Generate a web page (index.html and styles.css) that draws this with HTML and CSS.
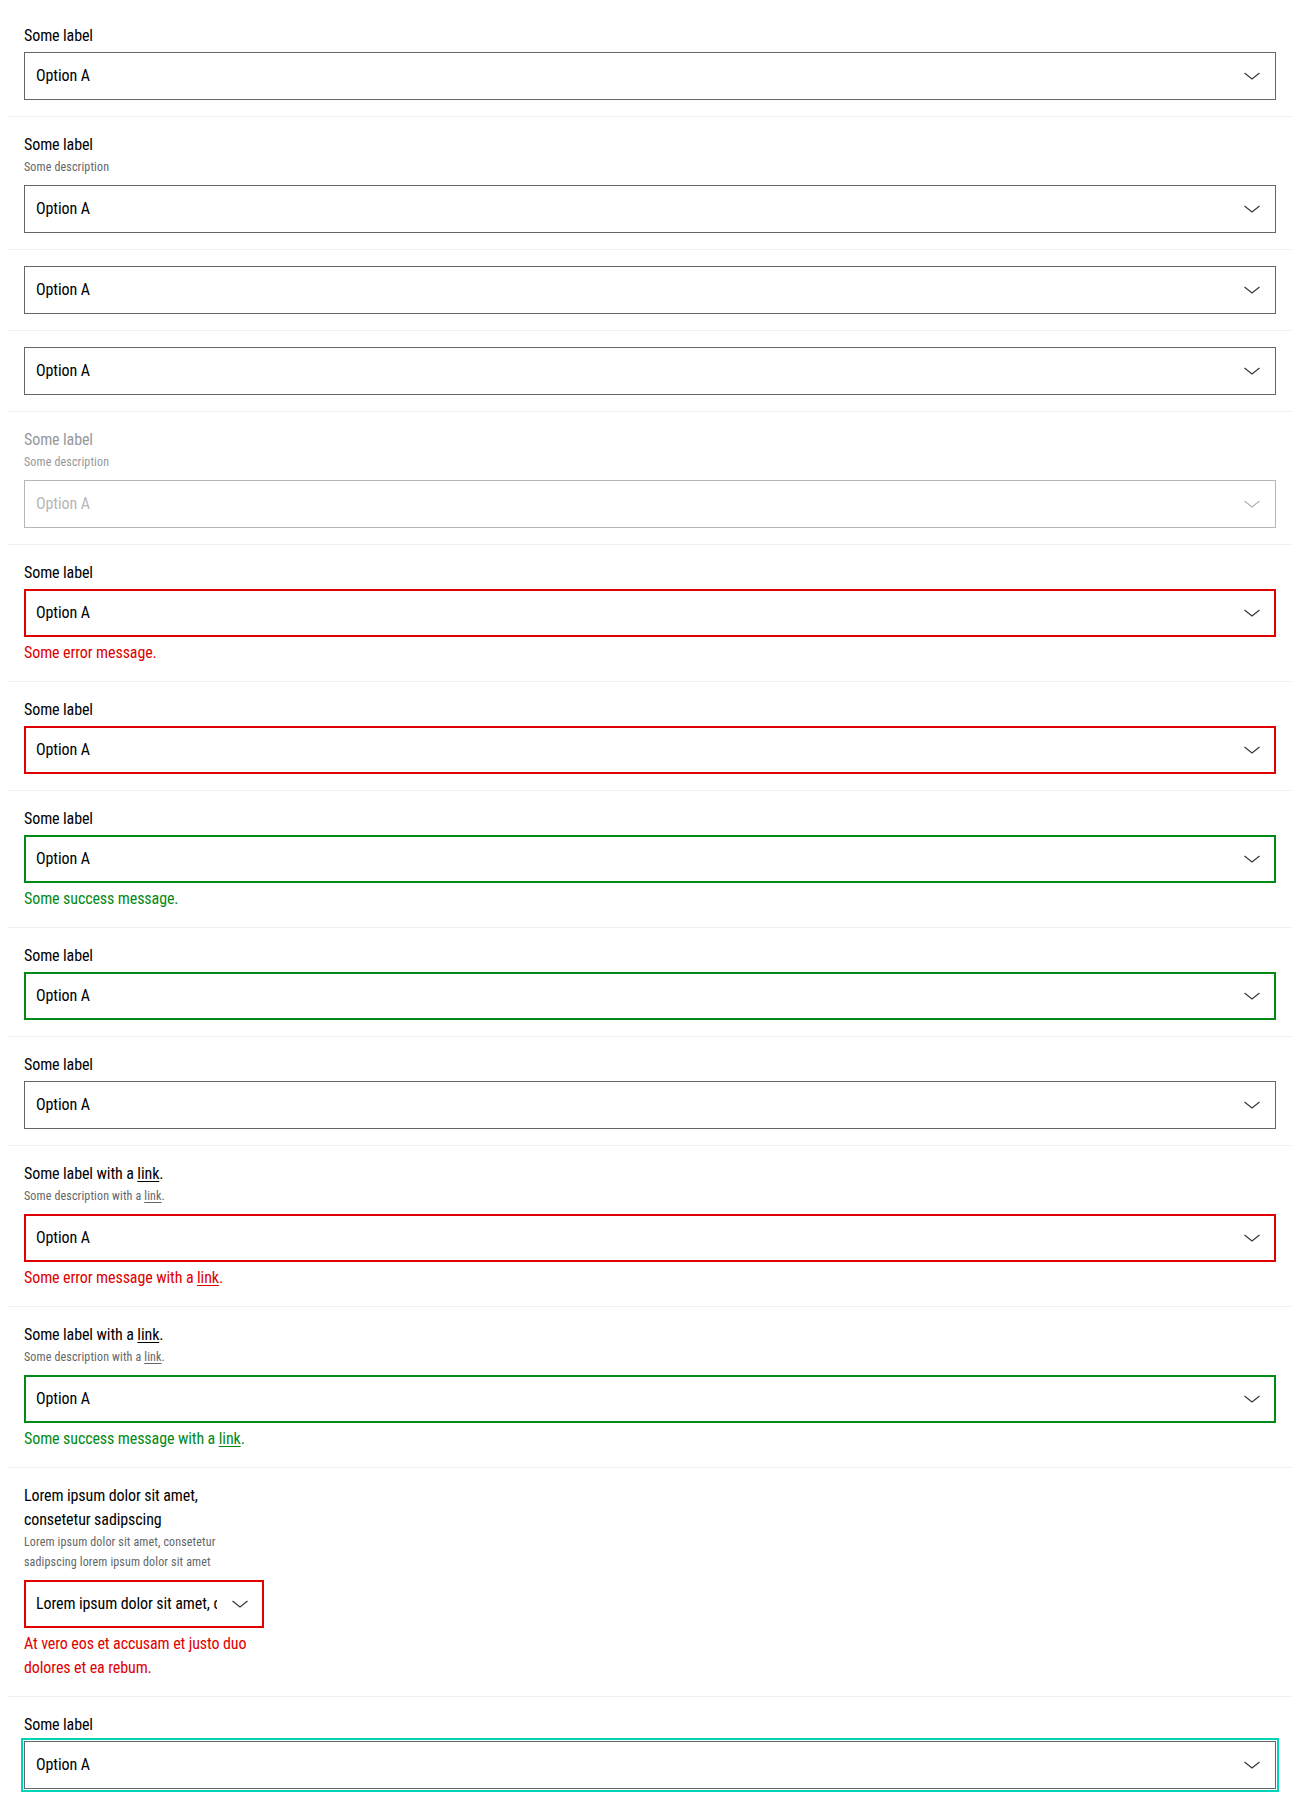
FILE: index.html
```html
<!DOCTYPE html>
<html lang="en">
<head>
<meta charset="utf-8">
<title>Select wrapper</title>
<link rel="stylesheet" href="styles.css">
</head>
<body>
<div class="playground">

  <div class="item">
    <label class="field">
      <span class="label">Some label</span>
      <span class="control">
        <select class="select"><option>Option A</option><option>Option B</option></select>
        <svg class="chevron" viewBox="0 0 24 24" width="24" height="24" aria-hidden="true"><polyline points="4.5,9 12,15 19.5,9"/></svg>
      </span>
    </label>
  </div>

  <div class="item">
    <label class="field">
      <span class="label">Some label</span>
      <span class="desc">Some description</span>
      <span class="control">
        <select class="select"><option>Option A</option><option>Option B</option></select>
        <svg class="chevron" viewBox="0 0 24 24" width="24" height="24" aria-hidden="true"><polyline points="4.5,9 12,15 19.5,9"/></svg>
      </span>
    </label>
  </div>

  <div class="item">
    <label class="field">
      <span class="control">
        <select class="select" aria-label="Some label"><option>Option A</option><option>Option B</option></select>
        <svg class="chevron" viewBox="0 0 24 24" width="24" height="24" aria-hidden="true"><polyline points="4.5,9 12,15 19.5,9"/></svg>
      </span>
    </label>
  </div>

  <div class="item">
    <label class="field">
      <span class="control">
        <select class="select" aria-label="Some label"><option>Option A</option><option>Option B</option></select>
        <svg class="chevron" viewBox="0 0 24 24" width="24" height="24" aria-hidden="true"><polyline points="4.5,9 12,15 19.5,9"/></svg>
      </span>
    </label>
  </div>

  <div class="item">
    <label class="field is-disabled">
      <span class="label">Some label</span>
      <span class="desc">Some description</span>
      <span class="control">
        <select class="select" disabled><option>Option A</option><option>Option B</option></select>
        <svg class="chevron" viewBox="0 0 24 24" width="24" height="24" aria-hidden="true"><polyline points="4.5,9 12,15 19.5,9"/></svg>
      </span>
    </label>
  </div>

  <div class="item">
    <label class="field is-error">
      <span class="label">Some label</span>
      <span class="control">
        <select class="select"><option>Option A</option><option>Option B</option></select>
        <svg class="chevron" viewBox="0 0 24 24" width="24" height="24" aria-hidden="true"><polyline points="4.5,9 12,15 19.5,9"/></svg>
      </span>
      <span class="message">Some error message.</span>
    </label>
  </div>

  <div class="item">
    <label class="field is-error">
      <span class="label">Some label</span>
      <span class="control">
        <select class="select"><option>Option A</option><option>Option B</option></select>
        <svg class="chevron" viewBox="0 0 24 24" width="24" height="24" aria-hidden="true"><polyline points="4.5,9 12,15 19.5,9"/></svg>
      </span>
    </label>
  </div>

  <div class="item">
    <label class="field is-success">
      <span class="label">Some label</span>
      <span class="control">
        <select class="select"><option>Option A</option><option>Option B</option></select>
        <svg class="chevron" viewBox="0 0 24 24" width="24" height="24" aria-hidden="true"><polyline points="4.5,9 12,15 19.5,9"/></svg>
      </span>
      <span class="message">Some success message.</span>
    </label>
  </div>

  <div class="item">
    <label class="field is-success">
      <span class="label">Some label</span>
      <span class="control">
        <select class="select"><option>Option A</option><option>Option B</option></select>
        <svg class="chevron" viewBox="0 0 24 24" width="24" height="24" aria-hidden="true"><polyline points="4.5,9 12,15 19.5,9"/></svg>
      </span>
    </label>
  </div>

  <div class="item">
    <label class="field">
      <span class="label">Some label</span>
      <span class="control">
        <select class="select"><option>Option A</option><option>Option B</option></select>
        <svg class="chevron" viewBox="0 0 24 24" width="24" height="24" aria-hidden="true"><polyline points="4.5,9 12,15 19.5,9"/></svg>
      </span>
    </label>
  </div>

  <div class="item">
    <div class="field is-error">
      <span class="label">Some label with a <a href="#" class="link">link</a>.</span>
      <span class="desc">Some description with a <a href="#" class="link">link</a>.</span>
      <span class="control">
        <select class="select" aria-label="Some label with a link"><option>Option A</option><option>Option B</option></select>
        <svg class="chevron" viewBox="0 0 24 24" width="24" height="24" aria-hidden="true"><polyline points="4.5,9 12,15 19.5,9"/></svg>
      </span>
      <span class="message">Some error message with a <a href="#" class="link">link</a>.</span>
    </div>
  </div>

  <div class="item">
    <div class="field is-success">
      <span class="label">Some label with a <a href="#" class="link">link</a>.</span>
      <span class="desc">Some description with a <a href="#" class="link">link</a>.</span>
      <span class="control">
        <select class="select" aria-label="Some label with a link"><option>Option A</option><option>Option B</option></select>
        <svg class="chevron" viewBox="0 0 24 24" width="24" height="24" aria-hidden="true"><polyline points="4.5,9 12,15 19.5,9"/></svg>
      </span>
      <span class="message">Some success message with a <a href="#" class="link">link</a>.</span>
    </div>
  </div>

  <div class="item">
    <label class="field is-error is-narrow">
      <span class="label">Lorem ipsum dolor sit amet, consetetur sadipscing</span>
      <span class="desc">Lorem ipsum dolor sit amet, consetetur sadipscing lorem ipsum dolor sit amet</span>
      <span class="control">
        <select class="select"><option>Lorem ipsum dolor sit amet, consetetur sadipscing</option><option>Option B</option></select>
        <svg class="chevron" viewBox="0 0 24 24" width="24" height="24" aria-hidden="true"><polyline points="4.5,9 12,15 19.5,9"/></svg>
      </span>
      <span class="message">At vero eos et accusam et justo duo dolores et ea rebum.</span>
    </label>
  </div>

  <div class="item">
    <label class="field">
      <span class="label">Some label</span>
      <span class="control">
        <select class="select is-focused"><option>Option A</option><option>Option B</option></select>
        <svg class="chevron" viewBox="0 0 24 24" width="24" height="24" aria-hidden="true"><polyline points="4.5,9 12,15 19.5,9"/></svg>
      </span>
    </label>
  </div>

</div>
</body>
</html>
```
FILE: styles.css
```css
html, body {
  background: #ffffff;
}

body {
  margin: 8px;
  font-family: "Roboto Condensed", Roboto, "Liberation Sans", sans-serif;
  font-size: 16px;
  line-height: 24px;
  color: #000000;
  letter-spacing: -0.1px;
}

.playground {
  display: flex;
  flex-direction: column;
}

.item {
  padding: 16px;
  border-bottom: 1px solid #eeeff0;
}

.item:last-child {
  border-bottom: none;
}

.field {
  display: flex;
  flex-direction: column;
}

.is-narrow {
  max-width: 240px;
}

.label {
  font-size: 16px;
  line-height: 24px;
  color: #000000;
}

.desc {
  font-size: 12px;
  line-height: 20px;
  color: #626669;
  letter-spacing: 0.15px;
  margin-bottom: 4px;
}

.label + .control,
.desc + .control {
  margin-top: 4px;
}

.link {
  color: inherit;
  text-decoration: underline;
  text-underline-offset: 2px;
  text-decoration-thickness: 1px;
}

.control {
  position: relative;
  display: block;
}

.select {
  display: block;
  box-sizing: border-box;
  width: 100%;
  height: 48px;
  margin: 0;
  padding: 0 46px 0 11px;
  border: 1px solid #626669;
  border-radius: 0;
  background: #ffffff;
  color: #000000;
  font: inherit;
  font-size: 16px;
  letter-spacing: -0.1px;
  -webkit-appearance: none;
  appearance: none;
  outline: none;
  white-space: nowrap;
  overflow: hidden;
}

.chevron {
  position: absolute;
  top: 50%;
  right: 12px;
  transform: translateY(-50%);
  fill: none;
  stroke: #323639;
  stroke-width: 1.2;
  stroke-linecap: butt;
  stroke-linejoin: miter;
  pointer-events: none;
}

.message {
  margin-top: 4px;
  font-size: 16px;
  line-height: 24px;
}

/* error */
.is-error .select {
  border-color: #e00000;
  box-shadow: inset 0 0 0 1px #e00000;
}

.is-error .message {
  color: #e00000;
}

/* success */
.is-success .select {
  border-color: #018a16;
  box-shadow: inset 0 0 0 1px #018a16;
}

.is-success .message {
  color: #018a16;
}

/* disabled */
.is-disabled .label,
.is-disabled .desc {
  color: #96989a;
}

.is-disabled .select {
  border-color: #96989a;
  color: #96989a;
}

.is-disabled .chevron {
  stroke: #b0b1b2;
}

/* focus state */
.select.is-focused {
  outline: 2px solid #00d5b9;
  outline-offset: 1px;
}
```
